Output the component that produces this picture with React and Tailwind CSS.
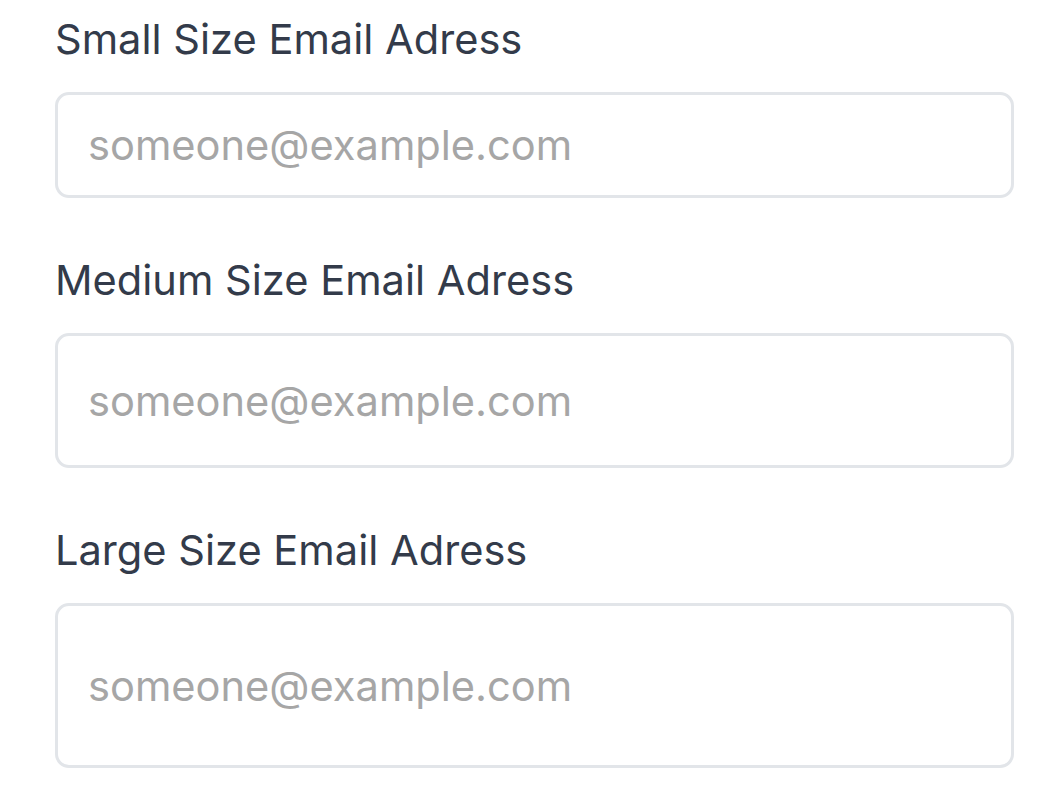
import React from "react";

const fields = [
  { label: "Small Size Email Adress", height: "h-[106px]" },
  { label: "Medium Size Email Adress", height: "h-[135px]" },
  { label: "Large Size Email Adress", height: "h-[165px]" },
];

const App = () => {
  return (
    <div className="min-h-screen bg-white pl-[55px] pr-[42px] pt-[14px] font-['Inter',sans-serif]">
      <div className="flex flex-col gap-[57px]">
        {fields.map((field) => (
          <div key={field.label} className="flex flex-col gap-[28px]">
            <label className="text-[41.6px] leading-[50px] text-[#333b4a]">
              {field.label}
            </label>
            <input
              type="email"
              placeholder="someone@example.com"
              className={`${field.height} w-full rounded-[14px] border-[3px] border-[#e2e5e9] px-[30px] text-[41.6px] text-[#333b4a] placeholder:text-[#a6a6a6] outline-none`}
            />
          </div>
        ))}
      </div>
    </div>
  );
};

export default App;
